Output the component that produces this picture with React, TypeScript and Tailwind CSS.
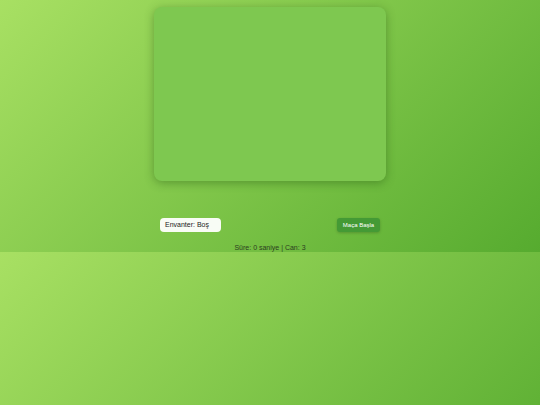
import React, { useState } from 'react';

export default function App() {
  const [inventory] = useState<string>('Boş');
  const [seconds] = useState(0);
  const [lives] = useState(3);

  return (
    <div
      className="min-h-[405px] w-full bg-[linear-gradient(135deg,#a8e063,#56ab2f)] bg-[length:100%_252px] bg-repeat-y"
      style={{ fontFamily: '"Liberation Sans", Arial, sans-serif' }}
    >
      <div className="flex h-[252px] flex-col items-center pt-[7px]">
        <div className="h-[174px] w-[232px] rounded-lg bg-[#7ec850] shadow-[0_2px_10px_rgba(40,90,20,0.45)]" />

        <div className="mt-[37px] flex w-[220px] items-center justify-between">
          <div className="flex h-[14px] w-[61px] items-center rounded-[4px] bg-white/95 pl-[5px] text-[7px] text-[#222]">
            Envanter: {inventory}
          </div>
          <button className="flex h-[14px] w-[43px] items-center justify-center rounded-[3px] bg-[#449a35] text-[6px] text-white shadow-[0_1px_3px_rgba(0,0,0,0.2)]">
            Maça Başla
          </button>
        </div>

        <div className="mt-[11px] text-[7px] leading-[9px] text-[#2c3d1f]">
          Süre: {seconds} saniye | Can: {lives}
        </div>
      </div>
    </div>
  );
}
